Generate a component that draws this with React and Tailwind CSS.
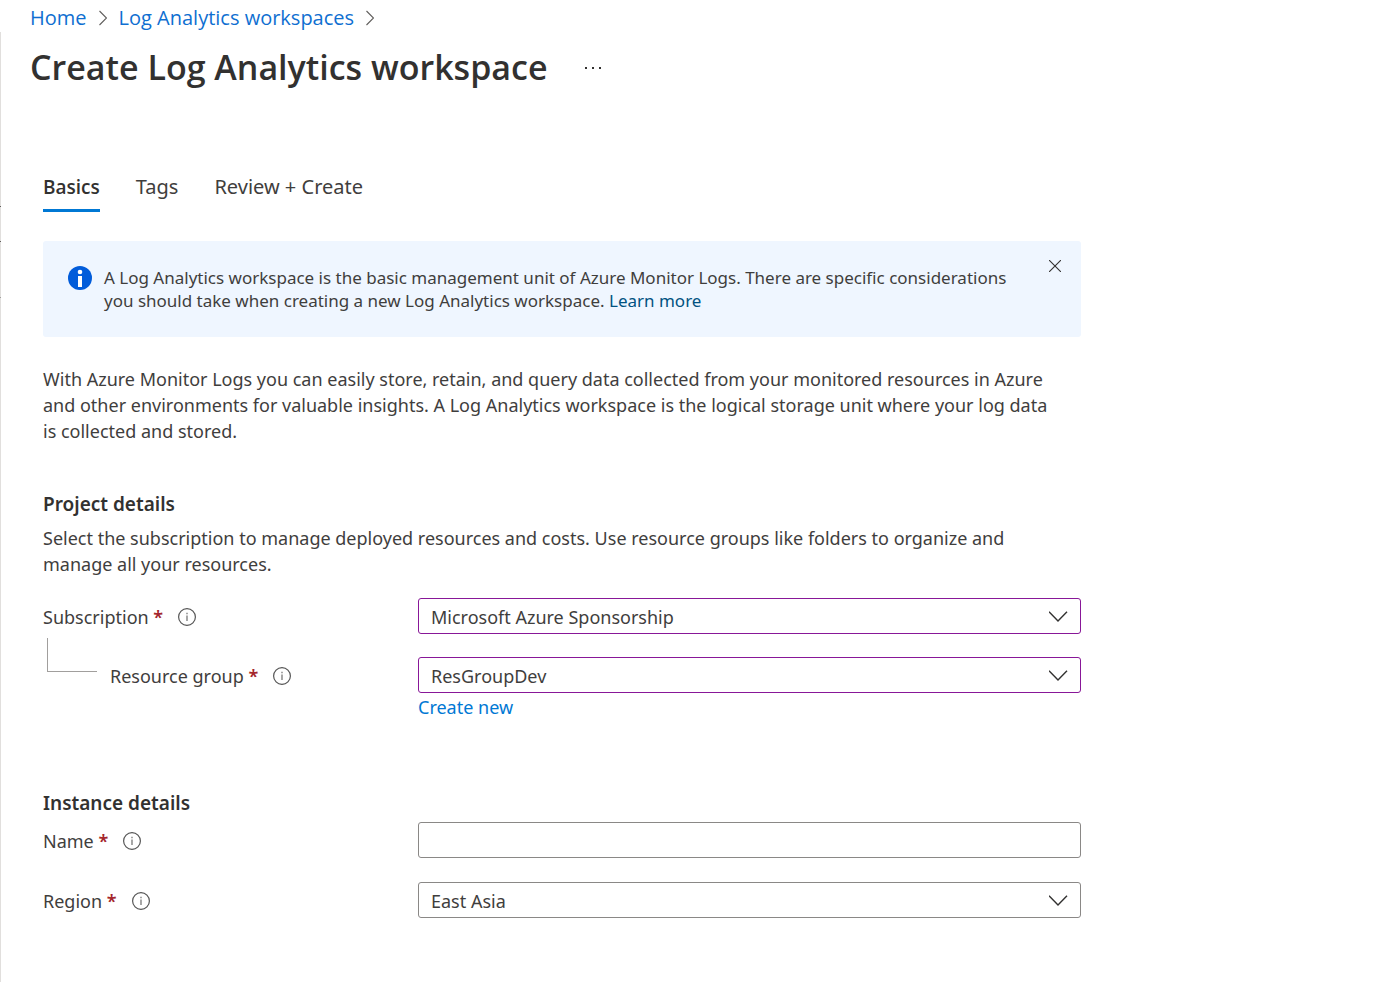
import React from "react";

const tabs = ["Basics", "Tags", "Review + Create"];

function BreadcrumbArrow() {
  return (
    <svg aria-hidden="true" className="h-4 w-2" viewBox="0 0 8 16" fill="none" stroke="#605e5c" strokeWidth="1.1">
      <path d="M0.5 1 L7.5 8 L0.5 15" />
    </svg>
  );
}

function InfoIcon() {
  return (
    <svg aria-hidden="true" className="size-5 shrink-0" viewBox="0 0 20 20" fill="none">
      <circle cx="10" cy="10" r="8.4" stroke="#555" strokeWidth="1.2" />
      <path d="M10 8.5 V14" stroke="#777" strokeWidth="1.3" />
      <path d="M10 5.8 V7.2" stroke="#777" strokeWidth="1.3" />
    </svg>
  );
}

function SectionHeading({ children }) {
  return <h2 className="text-[19px] leading-7 font-semibold text-[#323130]">{children}</h2>;
}

function FieldLabel({ id, children }) {
  return (
    <div className="flex h-9 items-center pt-px">
      <label htmlFor={id}>
        {children} <span className="font-semibold text-[#a4262c]">*</span>
      </label>
      <button type="button" aria-label={`About ${children}`} className="ml-3.5">
        <InfoIcon />
      </button>
    </div>
  );
}

function SelectField({ id, value, tone }) {
  return (
    <div className="relative">
      <select
        id={id}
        defaultValue={value}
        className={`block h-9 w-full appearance-none rounded-[3px] border bg-white px-3 pt-px pr-12 ${tone}`}
      >
        <option>{value}</option>
      </select>
      <svg
        aria-hidden="true"
        className="pointer-events-none absolute top-3 right-3 h-3 w-5"
        viewBox="0 0 20 12"
        fill="none"
        stroke="#323130"
        strokeWidth="1.4"
      >
        <path d="M0 1.8 L9 11 L18 1.8" />
      </svg>
    </div>
  );
}

export default function App() {
  return (
    <div className="flex min-h-screen bg-white font-['Noto_Sans',sans-serif] text-[18px] leading-[26px] text-[#3f3e3d]">
      <div aria-hidden="true" className="mt-8 flex w-px shrink-0 flex-col bg-[#e1dfdd]">
        <span className="mt-[174px] h-px bg-[#605e5c]" />
        <span className="mt-[34px] h-px bg-[#605e5c]" />
        <span className="mt-[55px] h-px bg-[#a19f9d]" />
      </div>
      <div className="min-w-0 flex-1 pr-8 pl-[29px]">
        <nav
          aria-label="Breadcrumb"
          className="flex h-9 items-center gap-3 font-['Open_Sans',sans-serif] text-[20px] text-[#0f6fd1]"
        >
          <a href="#home">Home</a>
          <BreadcrumbArrow />
          <a href="#workspaces">Log Analytics workspaces</a>
          <BreadcrumbArrow />
        </nav>
        <header className="mt-[9px] flex items-center gap-9">
          <h1 className="font-['Open_Sans',sans-serif] text-[34px] leading-[44px] font-semibold text-[#323130]">
            Create Log Analytics workspace
          </h1>
          <button type="button" aria-label="More actions">
            <svg className="h-2 w-5" viewBox="0 0 20 8" fill="#323130">
              <rect x="1" y="4" width="2" height="2" />
              <rect x="8" y="4" width="2" height="2" />
              <rect x="15" y="4" width="2" height="2" />
            </svg>
          </button>
        </header>

        <main className="max-w-[1051px] pl-[13px]">
          <div role="tablist" className="mt-[84px] flex gap-9 leading-7">
            {tabs.map((tab, i) => (
              <button
                key={tab}
                type="button"
                role="tab"
                aria-selected={i === 0}
                className={
                  i === 0
                    ? "border-b-[3px] border-[#0078d4] pb-2 font-['Open_Sans',sans-serif] text-[19px] font-semibold text-[#323130]"
                    : "border-b-[3px] border-transparent pb-2 text-[20px]"
                }
              >
                {tab}
              </button>
            ))}
          </div>

          <section className="mt-[29px] flex items-start rounded-[3px] bg-[#eff6ff] py-[25px] pr-5 pl-[25px]">
            <svg aria-hidden="true" className="size-6 shrink-0" viewBox="0 0 24 24">
              <circle cx="12" cy="12" r="12" fill="#015cda" />
              <circle cx="12" cy="6" r="2.3" fill="#fff" />
              <rect x="10" y="10" width="4" height="11" fill="#fff" />
            </svg>
            <p className="ml-3 flex-1 text-[17px] leading-[23px]">
              A Log Analytics workspace is the basic management unit of Azure Monitor Logs. There are specific
              considerations you should take when creating a new Log Analytics workspace.{" "}
              <a href="#learn" className="text-[#015281]">Learn more</a>
            </p>
            <button type="button" aria-label="Dismiss" className="-mt-[6px] ml-4">
              <svg className="size-3" viewBox="0 0 12 12" fill="none" stroke="#323130" strokeWidth="1.1">
                <path d="M0 0 L12 12 M12 0 L0 12" />
              </svg>
            </button>
          </section>

          <p className="mt-[29px] pr-6">
            With Azure Monitor Logs you can easily store, retain, and query data collected from your monitored
            resources in Azure and other environments for valuable insights. A Log Analytics workspace is the logical
            storage unit where your log data is collected and stored.
          </p>

          <div className="mt-[46px]">
            <SectionHeading>Project details</SectionHeading>
          </div>
          <p className="mt-[7px] pr-6">
            Select the subscription to manage deployed resources and costs. Use resource groups like folders to
            organize and manage all your resources.
          </p>

          <div className="mt-[21px] grid grid-cols-[375px_1fr]">
            <FieldLabel id="subscription">Subscription</FieldLabel>
            <SelectField id="subscription" value="Microsoft Azure Sponsorship" tone="border-[#881798]" />
            <div className="flex items-start">
              <span aria-hidden="true" className="mt-1 mr-[13px] ml-1 h-[34px] w-[50px] border-b border-l border-[#a19f9d]" />
              <div className="pt-[23px]">
                <FieldLabel id="group">Resource group</FieldLabel>
              </div>
            </div>
            <div className="pt-[23px]">
              <SelectField id="group" value="ResGroupDev" tone="border-[#881798]" />
              <a href="#new" className="block w-fit leading-7 text-[#0078d4]">Create new</a>
            </div>
          </div>

          <div className="mt-[68px]">
            <SectionHeading>Instance details</SectionHeading>
          </div>
          <div className="mt-[5px] grid grid-cols-[375px_1fr] gap-y-6">
            <FieldLabel id="name">Name</FieldLabel>
            <input id="name" type="text" className="h-9 w-full rounded-[3px] border border-[#8a8886] px-3" />
            <FieldLabel id="region">Region</FieldLabel>
            <SelectField id="region" value="East Asia" tone="border-[#8a8886]" />
          </div>
        </main>
      </div>
    </div>
  );
}
